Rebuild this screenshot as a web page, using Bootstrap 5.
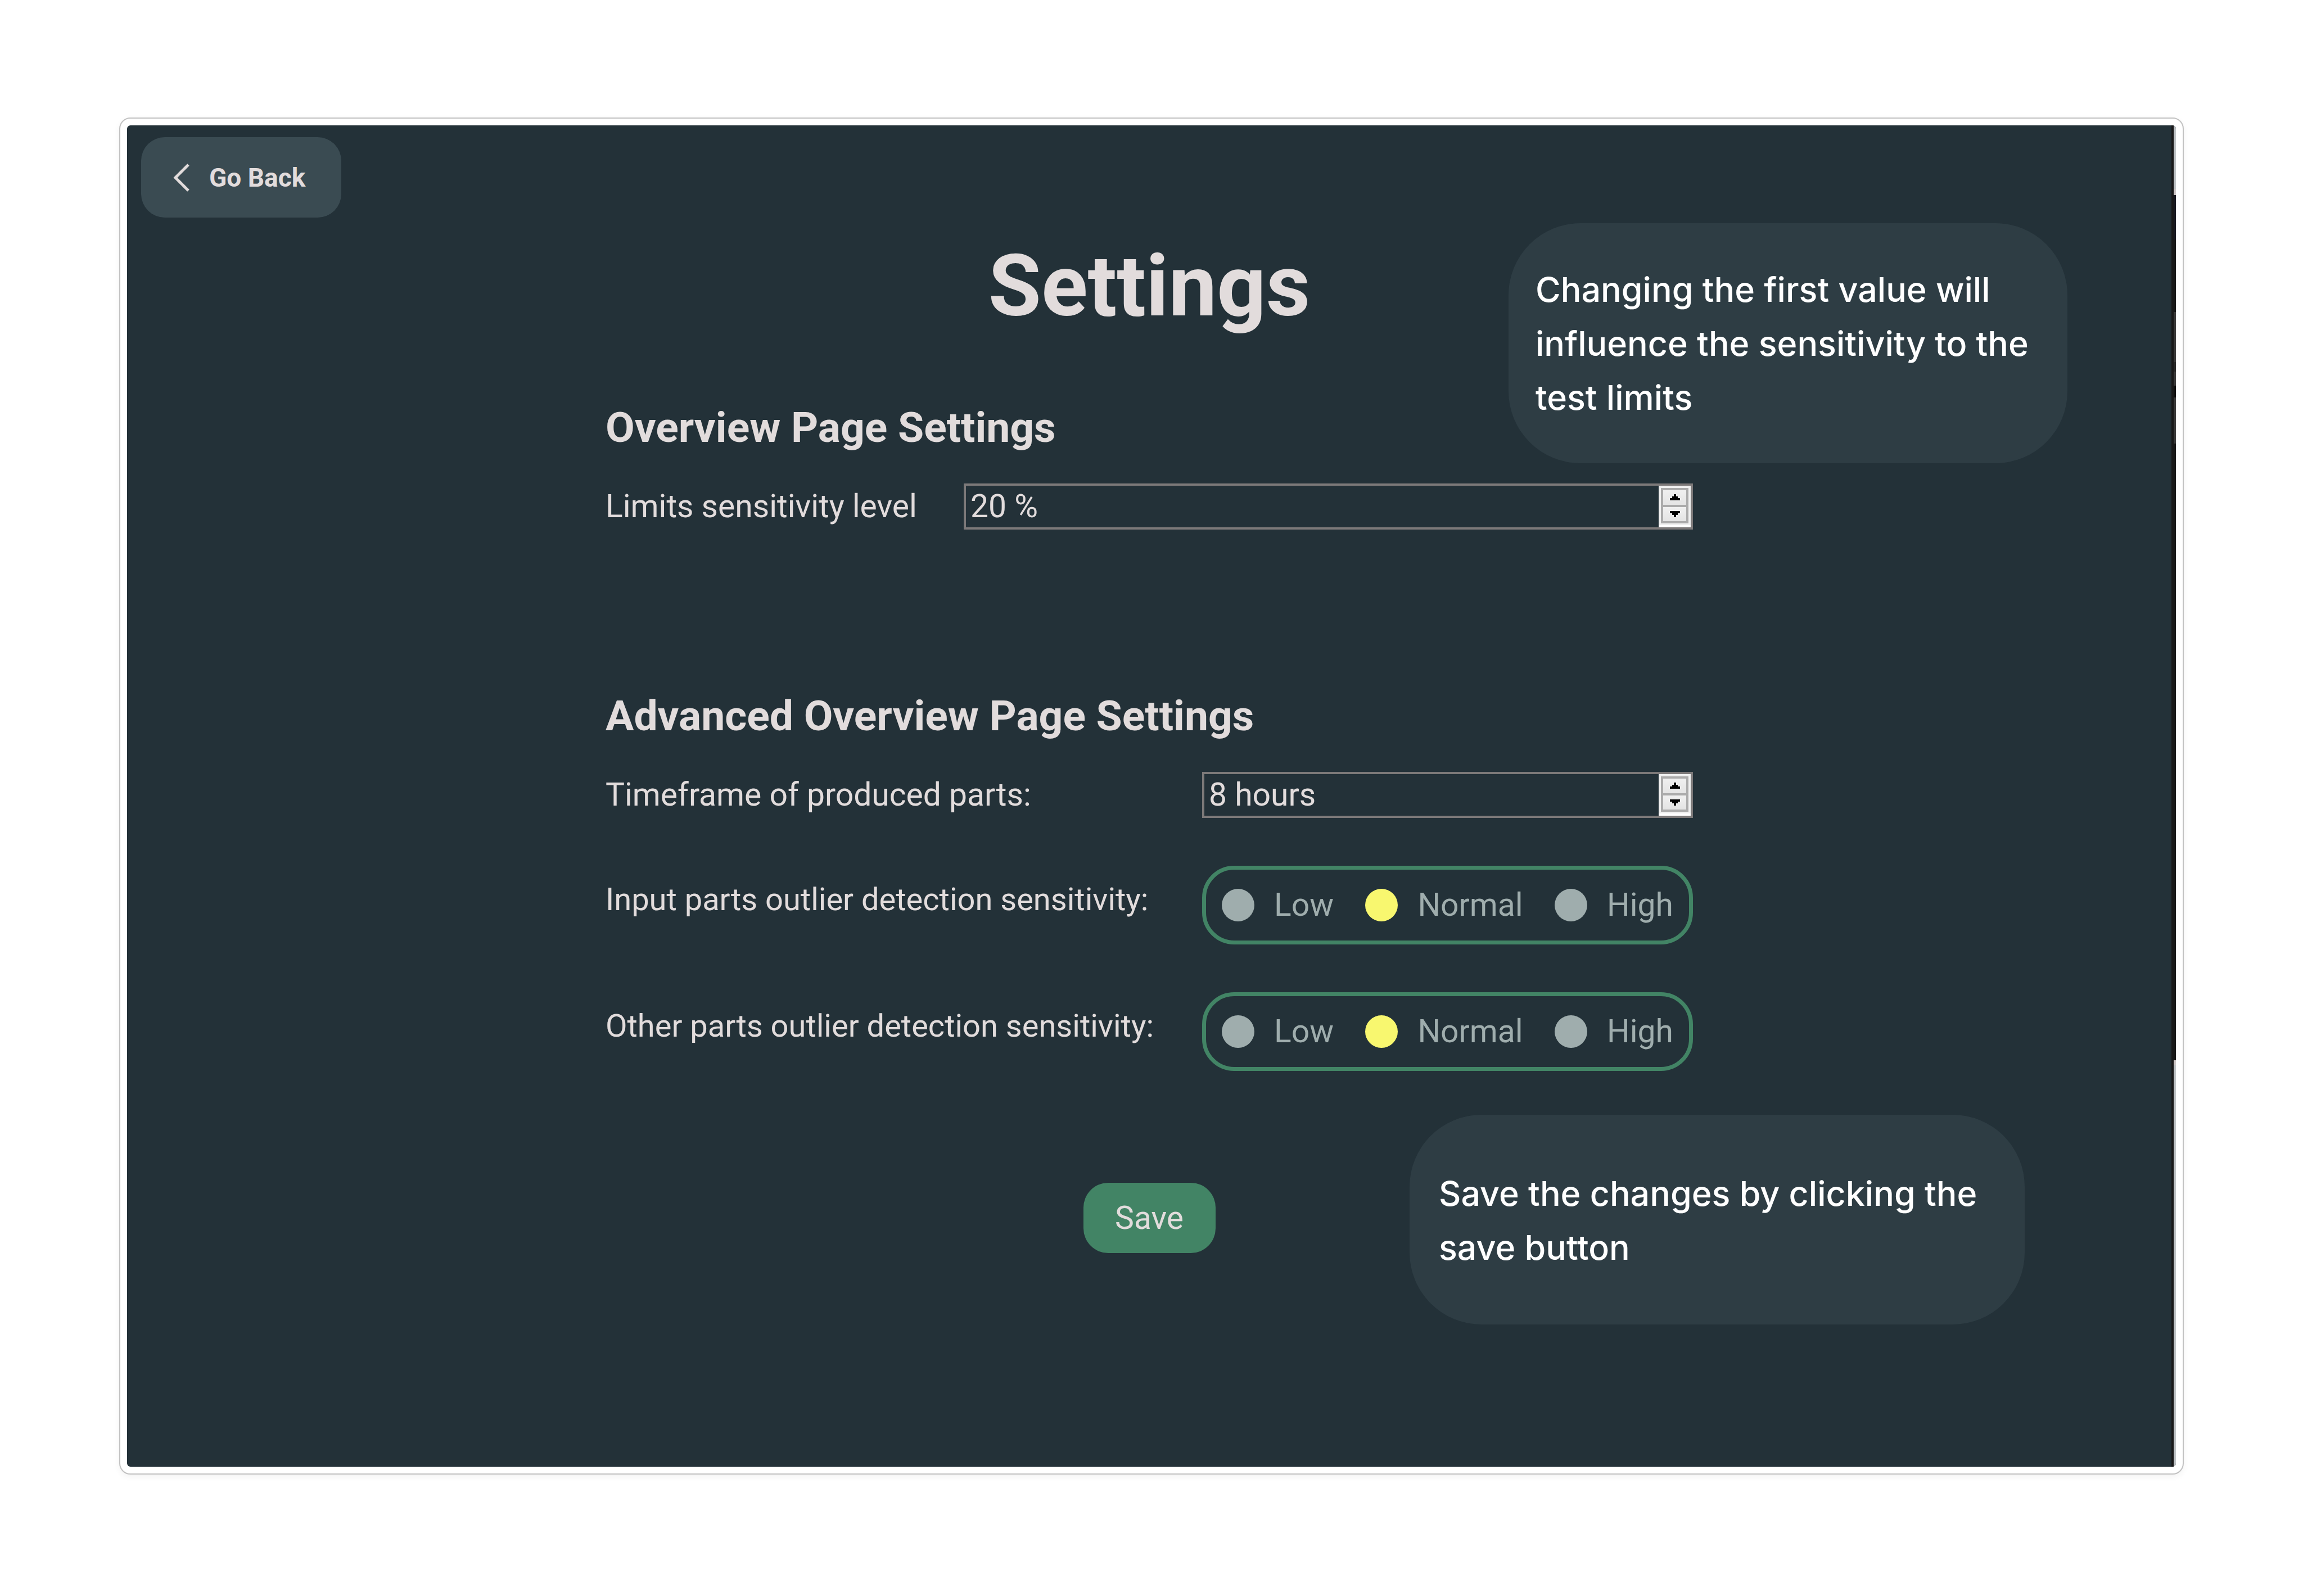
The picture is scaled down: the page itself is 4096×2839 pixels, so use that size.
<!DOCTYPE html>
<html lang="en">
<head>
<meta charset="utf-8">
<meta name="viewport" content="width=device-width, initial-scale=1">
<title>Settings</title>
<link href="https://cdn.jsdelivr.net/npm/bootstrap@5.3.0/dist/css/bootstrap.min.css" rel="stylesheet">
<style>
  :root {
    --panel: #233138;
    --ink: #e2dcdc;
    --muted: #9fadad;
    --green: #428465;
  }
  body { background: #fff; color: var(--ink); font-family: Roboto, sans-serif; font-size: 57px; line-height: 72px; }
  .page { padding: 209px 212px 216px; }
  .window-frame { border: 2px solid #c2c2c2; border-radius: 20px; padding: 12px; background: #fff; box-shadow: 0 4px 12px rgba(0, 0, 0, .05); }
  .window-body { background: var(--panel); border-radius: 6px; overflow: hidden; }
  .edge { width: 8px; border-left: 4px solid #191919;
    background: linear-gradient(#bfc3c6 113px, #cdc6c6 113px 124px, #191a22 124px 203px, #191919 203px 332px, #3b3b3b 332px 421px, #2a2a2a 421px 438px, #3b3b3b 438px 463px, #111 463px 484px, #3b3b3b 484px 566px, #191919 566px 1663px, #cdc6c6 1663px 1671px, #bfc3c6 1671px); }
  .go-back { margin: 21px 25px 0; width: 356px; height: 143px; padding: 0 0 0 57px; gap: 34px; border: 0; border-radius: 42px; background: #3a4b52; color: var(--ink); font-size: 46px; font-weight: 700; line-height: 60px; }
  .go-back svg { width: 30px; height: 50px; }
  .page-title { margin: 32px 0 0; font-size: 153px; line-height: 180px; font-weight: 700; }
  .settings-form { width: 100%; max-width: 1934px; }
  .section-title { margin: 0; font-size: 75px; line-height: 88px; font-weight: 700; }
  .first-section { margin-top: 117px; }
  .next-section { margin-top: 287px; }
  .field-row { margin-top: 56px; }
  .choice-row { margin-top: 85px; }
  .choice-row > .field-label { padding-bottom: 20px; font-size: 56px; }
  .spin-box { height: 82px; border: 4px solid #7c7979; }
  .spin-wide { width: 1297px; }
  .control-col { width: 873px; }
  .spin-box input { min-width: 0; padding: 0 8px; border: 0; outline: 0; background: transparent; color: var(--ink); font: inherit; }
  .stepper { width: 57px; padding: 4px 4px 3px; background: #f0f0f0; border-bottom: 4px solid #fff; }
  .stepper-inner { background: #ababab; padding: 4px; gap: 4px; }
  .stepper button { border: 0; padding: 0; background: linear-gradient(#f0f0f0, #e4e4e4); line-height: 0; }
  .stepper svg { width: 18px; height: 11px; }
  .choices { height: 140px; padding: 0 28px; border: 7px solid var(--green); border-radius: 57px; color: var(--muted); }
  .choices label { gap: 35px; }
  .choices input { appearance: none; margin: 0; width: 58px; height: 58px; border-radius: 50%; background: var(--muted); }
  .choices input:checked { background: #f8f76f; }
  .save-btn { margin-top: 199px; width: 235px; height: 125px; padding: 0; border: 0; border-radius: 44px; background: var(--green); color: var(--ink); font-size: 57px; line-height: 72px; }
  .tip { position: absolute; border-radius: 128px; background: #2e3d44; color: #fff; font-family: Inter, sans-serif; font-size: 61px; font-weight: 500; line-height: 96px; }
  .tip p { margin: 0; }
  .tip-limits { top: 174px; right: 193px; width: 994px; padding: 70px 48px 69px; }
  .tip-save { top: 1760px; right: 269px; width: 1094px; padding: 92px 52px 89px; }
</style>
</head>
<body>
<div class="page min-vh-100 d-flex">
  <div class="window-frame flex-grow-1 d-flex">
    <main class="window-body position-relative flex-grow-1 d-flex">
      <div class="flex-grow-1 d-flex flex-column">
        <button type="button" class="btn go-back d-flex align-items-center">
          <svg viewBox="0 0 30 50" fill="none" stroke="currentColor" stroke-width="5" aria-hidden="true"><path d="M27 2 4 25l23 23"/></svg>
          Go Back
        </button>
        <h1 class="page-title text-center">Settings</h1>
        <form class="settings-form mx-auto d-flex flex-column">
          <h2 class="section-title first-section">Overview Page Settings</h2>
          <div class="field-row d-flex justify-content-between align-items-center">
            <label for="limits">Limits sensitivity level</label>
            <div class="spin-box spin-wide d-flex">
              <input id="limits" type="text" class="flex-grow-1" value="20 %">
              <div class="stepper d-flex">
                <div class="stepper-inner flex-grow-1 d-flex flex-column">
                  <button type="button" class="flex-fill" aria-label="Increase limit"><svg viewBox="0 0 5 3" preserveAspectRatio="none" shape-rendering="crispEdges"><path d="M2 0h1v1h1v1h1v1H0V2h1V1h1z"/></svg></button>
                  <button type="button" class="flex-fill" aria-label="Decrease limit"><svg viewBox="0 0 5 3" preserveAspectRatio="none" shape-rendering="crispEdges"><path d="M0 0h5v1H4v1H3v1H2V2H1V1H0z"/></svg></button>
                </div>
              </div>
            </div>
          </div>

          <h2 class="section-title next-section">Advanced Overview Page Settings</h2>
          <div class="field-row d-flex justify-content-between align-items-center">
            <label for="timeframe">Timeframe of produced parts:</label>
            <div class="spin-box control-col d-flex">
              <input id="timeframe" type="text" class="flex-grow-1" value="8 hours">
              <div class="stepper d-flex">
                <div class="stepper-inner flex-grow-1 d-flex flex-column">
                  <button type="button" class="flex-fill" aria-label="More hours"><svg viewBox="0 0 5 3" preserveAspectRatio="none" shape-rendering="crispEdges"><path d="M2 0h1v1h1v1h1v1H0V2h1V1h1z"/></svg></button>
                  <button type="button" class="flex-fill" aria-label="Fewer hours"><svg viewBox="0 0 5 3" preserveAspectRatio="none" shape-rendering="crispEdges"><path d="M0 0h5v1H4v1H3v1H2V2H1V1H0z"/></svg></button>
                </div>
              </div>
            </div>
          </div>
          <div class="choice-row d-flex justify-content-between align-items-center">
            <span class="field-label" id="input-parts">Input parts outlier detection sensitivity:</span>
            <div class="choices control-col d-flex justify-content-between align-items-center" role="radiogroup" aria-labelledby="input-parts">
              <label class="d-flex align-items-center"><input type="radio" name="input-parts">Low</label>
              <label class="d-flex align-items-center"><input type="radio" name="input-parts" checked>Normal</label>
              <label class="d-flex align-items-center"><input type="radio" name="input-parts">High</label>
            </div>
          </div>
          <div class="choice-row d-flex justify-content-between align-items-center">
            <span class="field-label" id="other-parts">Other parts outlier detection sensitivity:</span>
            <div class="choices control-col d-flex justify-content-between align-items-center" role="radiogroup" aria-labelledby="other-parts">
              <label class="d-flex align-items-center"><input type="radio" name="other-parts">Low</label>
              <label class="d-flex align-items-center"><input type="radio" name="other-parts" checked>Normal</label>
              <label class="d-flex align-items-center"><input type="radio" name="other-parts">High</label>
            </div>
          </div>
          <button type="button" class="btn save-btn align-self-center">Save</button>
        </form>
      </div>
      <div class="edge"></div>
      <aside class="tip tip-limits"><p>Changing the first value will influence the sensitivity to the test limits</p></aside>
      <aside class="tip tip-save"><p>Save the changes by clicking the save button</p></aside>
    </main>
  </div>
</div>
<script src="https://cdn.jsdelivr.net/npm/bootstrap@5.3.0/dist/js/bootstrap.bundle.min.js"></script>
</body>
</html>
